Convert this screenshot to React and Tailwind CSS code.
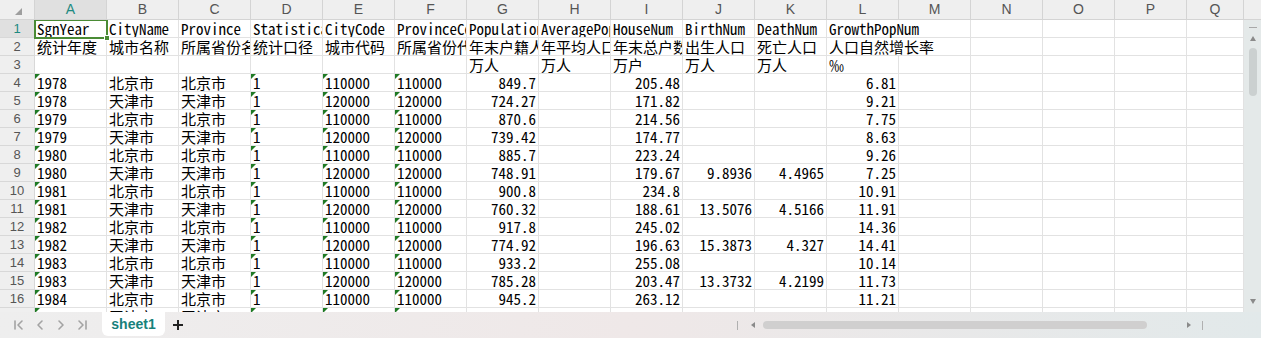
import React from 'react';

const COLS = ['A', 'B', 'C', 'D', 'E', 'F', 'G', 'H', 'I', 'J', 'K', 'L', 'M', 'N', 'O', 'P', 'Q'];

const head1 = ['SgnYear', 'CityName', 'Province', 'StatisticalCaliber', 'CityCode', 'ProvinceCode', 'PopulationNum', 'AveragePopNum', 'HouseNum', 'BirthNum', 'DeathNum', 'GrowthPopNum'];
const head2 = ['统计年度', '城市名称', '所属省份名称', '统计口径', '城市代码', '所属省份代码', '年末户籍人口', '年平均人口数', '年末总户数', '出生人口', '死亡人口', '人口自然增长率'];
const head3 = ['', '', '', '', '', '', '万人', '万人', '万户', '万人', '万人', '‰'];

// year, city, population, households, births, deaths, growth
const data = [
  ['1978', '北京市', '849.7', '205.48', '', '', '6.81'],
  ['1978', '天津市', '724.27', '171.82', '', '', '9.21'],
  ['1979', '北京市', '870.6', '214.56', '', '', '7.75'],
  ['1979', '天津市', '739.42', '174.77', '', '', '8.63'],
  ['1980', '北京市', '885.7', '223.24', '', '', '9.26'],
  ['1980', '天津市', '748.91', '179.67', '9.8936', '4.4965', '7.25'],
  ['1981', '北京市', '900.8', '234.8', '', '', '10.91'],
  ['1981', '天津市', '760.32', '188.61', '13.5076', '4.5166', '11.91'],
  ['1982', '北京市', '917.8', '245.02', '', '', '14.36'],
  ['1982', '天津市', '774.92', '196.63', '15.3873', '4.327', '14.41'],
  ['1983', '北京市', '933.2', '255.08', '', '', '10.14'],
  ['1983', '天津市', '785.28', '203.47', '13.3732', '4.2199', '11.73'],
  ['1984', '北京市', '945.2', '263.12', '', '', '11.21'],
  ['1984', '天津市', '796.01', '208.35', '', '', '10.52'],
];

const cellFont = { fontFamily: "'Noto Sans Mono CJK SC', 'Liberation Mono', 'Noto Sans CJK SC', monospace" };

const Triangle = () => (
  <span className="absolute left-0 top-0 w-0 h-0 border-t-[5px] border-r-[5px] border-t-[#1f7a24] border-r-transparent" />
);

const Cell = ({ value, right, tri, last, spill }) => (
  <div
    className={`relative shrink-0 h-[18px] border-r border-b border-[#e2e2e2] ${last ? 'w-[57px]' : 'w-[72px]'} ${spill ? 'overflow-visible z-10' : 'overflow-hidden'}`}
  >
    {tri && <Triangle />}
    {value !== '' && (
      <span
        style={cellFont}
        className={`absolute bottom-0 whitespace-nowrap text-[15px] leading-[17px] text-black ${
          spill
            ? 'left-[2px] bg-white pr-1'
            : right
            ? 'left-0 right-[2px] text-right overflow-hidden'
            : 'left-[2px] right-0 overflow-hidden'
        }`}
      >
        {value}
      </span>
    )}
  </div>
);

const RowHead = ({ n, active }) => (
  <div
    className={`shrink-0 w-[35px] h-[18px] border-r border-b border-[#d8d8d8] flex items-center justify-center text-[13px] ${active ? 'bg-[#e0e0e0] text-[#1d8a80]' : 'bg-[#efefef] text-[#555]'}`}
    style={{ fontFamily: "'Liberation Sans', Arial, sans-serif" }}
  >
    {n}
  </div>
);

function buildRows() {
  const rows = [];
  rows.push({ cells: COLS.map((_, i) => ({ value: head1[i] || '', spill: i === 11 })) });
  rows.push({ cells: COLS.map((_, i) => ({ value: head2[i] || '', spill: i === 11 })) });
  rows.push({ cells: COLS.map((_, i) => ({ value: head3[i] || '' })) });
  data.forEach(([year, city, pop, house, birth, death, growth]) => {
    const code = city === '北京市' ? '110000' : '120000';
    const vals = [year, city, city, '1', code, code, pop, '', house, birth, death, growth];
    rows.push({
      cells: COLS.map((_, i) => ({
        value: vals[i] || '',
        tri: i === 0 || i === 3 || i === 4 || i === 5,
        right: i >= 6 && i <= 11,
      })),
    });
  });
  return rows;
}

const NavIcon = ({ kind }) => (
  <svg width="12" height="12" viewBox="0 0 12 12" fill="none" stroke="#a3a3a3" strokeWidth="1.6" strokeLinecap="round" strokeLinejoin="round">
    {kind === 'first' && (<><path d="M2 2v8" /><path d="M9 2L5 6l4 4" /></>)}
    {kind === 'prev' && <path d="M8 2L4 6l4 4" />}
    {kind === 'next' && <path d="M4 2l4 4-4 4" />}
    {kind === 'last' && (<><path d="M3 2l4 4-4 4" /><path d="M10 2v8" /></>)}
  </svg>
);

export default function App() {
  const rows = buildRows();
  return (
    <div className="w-[1261px] h-[338px] overflow-hidden bg-white flex flex-col select-none">
      {/* sheet area */}
      <div className="h-[312px] flex">
        <div className="w-[1244px] flex flex-col overflow-hidden">
          {/* column header */}
          <div className="flex h-[20px] shrink-0">
            <div className="relative shrink-0 w-[35px] h-[20px] bg-[#efefef] border-r border-b border-[#d4d4d4]">
              <svg className="absolute left-[15px] top-[8px]" width="7" height="7" viewBox="0 0 7 7">
                <path d="M7 0V7H0Z" fill="#9e9e9e" />
              </svg>
            </div>
            {COLS.map((c, i) => (
              <div
                key={c}
                className={`shrink-0 h-[20px] border-r border-b border-[#d4d4d4] flex items-center justify-center text-[14px] ${i === 16 ? 'w-[57px]' : 'w-[72px]'} ${i === 0 ? 'bg-[#e0e0e0] text-[#1d8a80]' : 'bg-[#efefef] text-[#555]'}`}
                style={{ fontFamily: "'Liberation Sans', Arial, sans-serif" }}
              >
                {c}
              </div>
            ))}
          </div>
          {/* body */}
          <div className="relative flex-1 overflow-hidden">
            {rows.map((r, ri) => (
              <div key={ri} className="flex">
                <RowHead n={ri + 1} active={ri === 0} />
                {r.cells.map((c, ci) => (
                  <Cell key={ci} {...c} last={ci === 16} />
                ))}
              </div>
            ))}
            {/* selection A1 */}
            <div className="absolute left-[34px] top-[-1px] w-[74px] h-[20px] border-2 border-[#4a8b35] z-20 pointer-events-none">
              <span className="absolute right-[-4px] bottom-[-4px] w-[6px] h-[6px] bg-[#4a8b35] border border-white" />
            </div>
          </div>
        </div>
        {/* vertical scrollbar */}
        <div className="w-[17px] flex flex-col">
          <div className="h-[20px] bg-[#efefef] border-b border-[#d4d4d4]" />
          <div className="flex-1 bg-[#e4e9e9] flex flex-col items-center pt-[7px]">
            <div className="w-[8px] h-[1px] bg-[#a8a8a8]" />
            <div className="mt-[8px] w-0 h-0 border-l-[3px] border-r-[3px] border-b-[5px] border-l-transparent border-r-transparent border-b-[#8a8a8a]" />
            <div className="mt-[7px] w-[8px] h-[48px] rounded-full bg-[#cbd0d0]" />
            <div className="flex-1" />
            <div className="mb-[8px] w-0 h-0 border-l-[3px] border-r-[3px] border-t-[5px] border-l-transparent border-r-transparent border-t-[#8a8a8a]" />
          </div>
        </div>
      </div>
      {/* sheet tabs bar */}
      <div className="h-[26px] flex items-start bg-gradient-to-r from-[#eeeeee] via-[#efe8e8] to-[#e2e9ea]" style={{ fontFamily: "'Liberation Sans', Arial, sans-serif" }}>
        <div className="w-[102px] h-[26px] flex items-center pl-[13px] gap-[9px]">
          <NavIcon kind="first" />
          <NavIcon kind="prev" />
          <NavIcon kind="next" />
          <NavIcon kind="last" />
        </div>
        <div className="w-[63px] h-[24px] bg-white rounded-b-[6px] flex items-center justify-center text-[14px] font-bold text-[#17817b]">
          sheet1
        </div>
        <div className="w-[25px] h-[26px] flex items-center justify-center">
          <svg width="12" height="12" viewBox="0 0 12 12" stroke="#222" strokeWidth="2">
            <path d="M6 1v10M1 6h10" />
          </svg>
        </div>
        <div className="ml-[547px] h-[26px] flex items-center">
          <div className="w-[1px] h-[9px] bg-[#b0b0b0]" />
          <div className="ml-[13px] w-0 h-0 border-t-[3px] border-b-[3px] border-r-[4px] border-t-transparent border-b-transparent border-r-[#8a8a8a]" />
          <div className="ml-[8px] w-[384px] h-[8px] rounded-full bg-[#d0cfcf]" />
          <div className="ml-[40px] w-0 h-0 border-t-[3px] border-b-[3px] border-l-[4px] border-t-transparent border-b-transparent border-l-[#8a8a8a]" />
          <div className="ml-[11px] w-[1px] h-[9px] bg-[#b0b0b0]" />
        </div>
      </div>
    </div>
  );
}
